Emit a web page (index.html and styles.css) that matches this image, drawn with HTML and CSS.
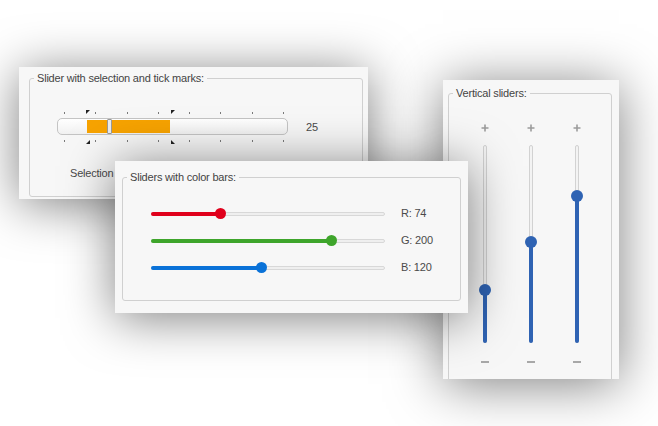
FILE: index.html
```html
<!DOCTYPE html>
<html>
<head>
<meta charset="utf-8">
<link rel="stylesheet" href="styles.css">
</head>
<body>
<div class="canvas">

  <div class="win win1">
    <fieldset class="group">
      <legend>Slider with selection and tick marks:</legend>
      <div class="slider-row">
        <div class="hslider">
          <div class="ticks top">
            <i></i><i></i><i></i><i></i><i></i><i></i><i></i><i></i>
            <b class="mk mk-tl" style="left:22px"></b>
            <b class="mk mk-tr" style="left:107px"></b>
          </div>
          <div class="track">
            <div class="sel" style="left:29px;width:83px"></div>
            <div class="knob" style="left:49px"></div>
          </div>
          <div class="ticks bottom">
            <i></i><i></i><i></i><i></i><i></i><i></i><i></i><i></i>
            <b class="mk mk-bl" style="left:22px"></b>
            <b class="mk mk-br" style="left:107px"></b>
          </div>
        </div>
        <div class="value">25</div>
      </div>
      <div class="sel-label">Selection</div>
    </fieldset>
  </div>

  <div class="win win3">
    <fieldset class="group vgroup">
      <legend>Vertical sliders:</legend>
      <div class="vcols">
        <div class="vcol">
          <svg class="plus" width="8" height="8" viewBox="0 0 8 8"><path d="M4 0.5V7.5M0.5 4H7.5" stroke="#9c9c9c" stroke-width="1.6"/></svg>
          <div class="vtrack">
            <div class="vfill" style="height:52px"></div>
            <div class="vthumb" style="bottom:52px"></div>
          </div>
          <span class="minus"></span>
        </div>
        <div class="vcol">
          <svg class="plus" width="8" height="8" viewBox="0 0 8 8"><path d="M4 0.5V7.5M0.5 4H7.5" stroke="#9c9c9c" stroke-width="1.6"/></svg>
          <div class="vtrack">
            <div class="vfill" style="height:100px"></div>
            <div class="vthumb" style="bottom:100px"></div>
          </div>
          <span class="minus"></span>
        </div>
        <div class="vcol">
          <svg class="plus" width="8" height="8" viewBox="0 0 8 8"><path d="M4 0.5V7.5M0.5 4H7.5" stroke="#9c9c9c" stroke-width="1.6"/></svg>
          <div class="vtrack">
            <div class="vfill" style="height:146px"></div>
            <div class="vthumb" style="bottom:146px"></div>
          </div>
          <span class="minus"></span>
        </div>
      </div>
    </fieldset>
  </div>

  <div class="win win2">
    <fieldset class="group">
      <legend>Sliders with color bars:</legend>
      <div class="crows">
        <div class="crow">
          <div class="cslider red">
            <div class="ctrack"></div>
            <div class="cfill" style="width:calc(5px + 29.0% - 2.9px)"></div>
            <div class="cthumb" style="left:calc(5px + 29.0% - 2.9px)"></div>
          </div>
          <span class="clabel">R: 74</span>
        </div>
        <div class="crow">
          <div class="cslider green">
            <div class="ctrack"></div>
            <div class="cfill" style="width:calc(5px + 78.4% - 7.84px)"></div>
            <div class="cthumb" style="left:calc(5px + 78.4% - 7.84px)"></div>
          </div>
          <span class="clabel">G: 200</span>
        </div>
        <div class="crow">
          <div class="cslider blue">
            <div class="ctrack"></div>
            <div class="cfill" style="width:calc(5px + 47.1% - 4.71px)"></div>
            <div class="cthumb" style="left:calc(5px + 47.1% - 4.71px)"></div>
          </div>
          <span class="clabel">B: 120</span>
        </div>
      </div>
    </fieldset>
  </div>

</div>
</body>
</html>
```

FILE: styles.css
```css
html, body {
  margin: 0;
  padding: 0;
  background: #ffffff;
}

.canvas {
  position: relative;
  width: 658px;
  height: 426px;
  overflow: hidden;
  background: #ffffff;
  font-family: "Liberation Sans", Arial, sans-serif;
  font-size: 11px;
  letter-spacing: -0.2px;
  color: #4a4a4a;
}

.win {
  position: absolute;
  box-sizing: border-box;
  background: #f7f7f7;
  box-shadow: 0 5px 50px rgba(0, 0, 0, 0.5);
  display: flex;
  flex-direction: column;
  overflow: hidden;
}

.win1 {
  left: 19px;
  top: 67px;
  width: 349px;
  height: 132px;
  padding: 5px 5px 2px 10px;
  z-index: 1;
}

.win3 {
  left: 443px;
  top: 80px;
  width: 176px;
  height: 299px;
  padding: 7px 7px 0 5px;
  z-index: 2;
}

.win2 {
  left: 115px;
  top: 161px;
  width: 353px;
  height: 152px;
  padding: 10px 7px 12px 7px;
  z-index: 3;
}

.group {
  margin: 0;
  padding: 0;
  flex: 1;
  min-width: 0;
  border: 1px solid #d0d0d0;
  border-radius: 3px;
}

.group legend {
  margin-left: 4px;
  padding: 0 3px;
  line-height: 13px;
  color: #444444;
}

/* ---------- window 1 ---------- */
.slider-row {
  display: flex;
  align-items: center;
  margin-top: 27px;
  padding-left: 27px;
}

.hslider {
  width: 231px;
  display: flex;
  flex-direction: column;
}

.ticks {
  position: relative;
  height: 2px;
  margin: 0 4px 0 7px;
  display: flex;
  justify-content: space-between;
}

.ticks.top { margin-bottom: 4px; }
.ticks.bottom { margin-top: 5px; }

.ticks i {
  display: block;
  width: 1px;
  height: 2px;
  background: #7a7a7a;
}

.mk {
  position: absolute;
  width: 0;
  height: 0;
  border-style: solid;
}

.ticks.top .mk { top: -2px; }
.ticks.bottom .mk { top: 0; }

.mk-tl { border-width: 0 4px 4px 0; border-color: transparent #222 transparent transparent; transform: rotate(-90deg); }
.mk-tr { border-width: 4px 4px 0 0; border-color: #222 transparent transparent transparent; }
.mk-bl { border-width: 0 0 4px 4px; border-color: transparent transparent #222 transparent; }
.mk-br { border-width: 4px 0 0 4px; border-color: transparent transparent transparent #222; }

.track {
  position: relative;
  box-sizing: border-box;
  height: 17px;
  border: 1px solid #c4c4c4;
  border-radius: 5px;
  background: linear-gradient(#ffffff, #f1f1f1);
}

.sel {
  position: absolute;
  top: 1px;
  bottom: 1px;
  background: #f7a300;
}

.knob {
  position: absolute;
  top: 0;
  bottom: 0;
  width: 5px;
  box-sizing: border-box;
  border: 1px solid #9a9a9a;
  border-radius: 1px;
  background: #ececec;
}

.value {
  margin-left: 18px;
  font-size: 11px;
}

.sel-label {
  margin-top: 25px;
  padding-left: 40px;
  line-height: 13px;
  white-space: nowrap;
}

/* ---------- window 2 ---------- */
.crows {
  display: flex;
  flex-direction: column;
  gap: 14px;
  margin-top: 23px;
  padding-left: 28px;
}

.crow {
  display: flex;
  align-items: center;
  gap: 16px;
}

.cslider {
  position: relative;
  width: 234px;
  height: 11px;
  display: flex;
  align-items: center;
}

.ctrack {
  flex: 1;
  height: 4px;
  box-sizing: border-box;
  border: 1px solid #d8d8d8;
  border-radius: 2px;
  background: #efefef;
}

.cfill {
  position: absolute;
  left: 0;
  top: 3.5px;
  height: 4px;
  border-radius: 2px;
}

.cthumb {
  position: absolute;
  top: 0;
  width: 11px;
  height: 11px;
  margin-left: -5.5px;
  border-radius: 50%;
}

.red .cfill, .red .cthumb { background: #e0001c; }
.green .cfill, .green .cthumb { background: #3ea52b; }
.blue .cfill, .blue .cthumb { background: #0a72d8; }

.clabel {
  line-height: 13px;
}

/* ---------- window 3 ---------- */
.vgroup {
  flex: none;
  height: 320px;
}

.vcols {
  display: flex;
  gap: 26px;
  padding-left: 26px;
  margin-top: 24px;
}

.vcol {
  width: 20px;
  display: flex;
  flex-direction: column;
  align-items: center;
}

.plus {
  display: block;
}

.vtrack {
  position: relative;
  margin-top: 13px;
  width: 4px;
  height: 198px;
  box-sizing: border-box;
  border: 1px solid #d2d2d2;
  border-radius: 2px;
  background: #f3f3f3;
}

.vfill {
  position: absolute;
  left: -1px;
  right: -1px;
  bottom: -1px;
  border-radius: 2px;
  background: #2f63b3;
}

.vthumb {
  position: absolute;
  left: 50%;
  width: 12px;
  height: 12px;
  margin-left: -6px;
  margin-bottom: -6px;
  border-radius: 50%;
  background: #2f63b3;
}

.minus {
  display: block;
  margin-top: 18px;
  width: 8px;
  height: 2px;
  background: #a8a8a8;
}
```
